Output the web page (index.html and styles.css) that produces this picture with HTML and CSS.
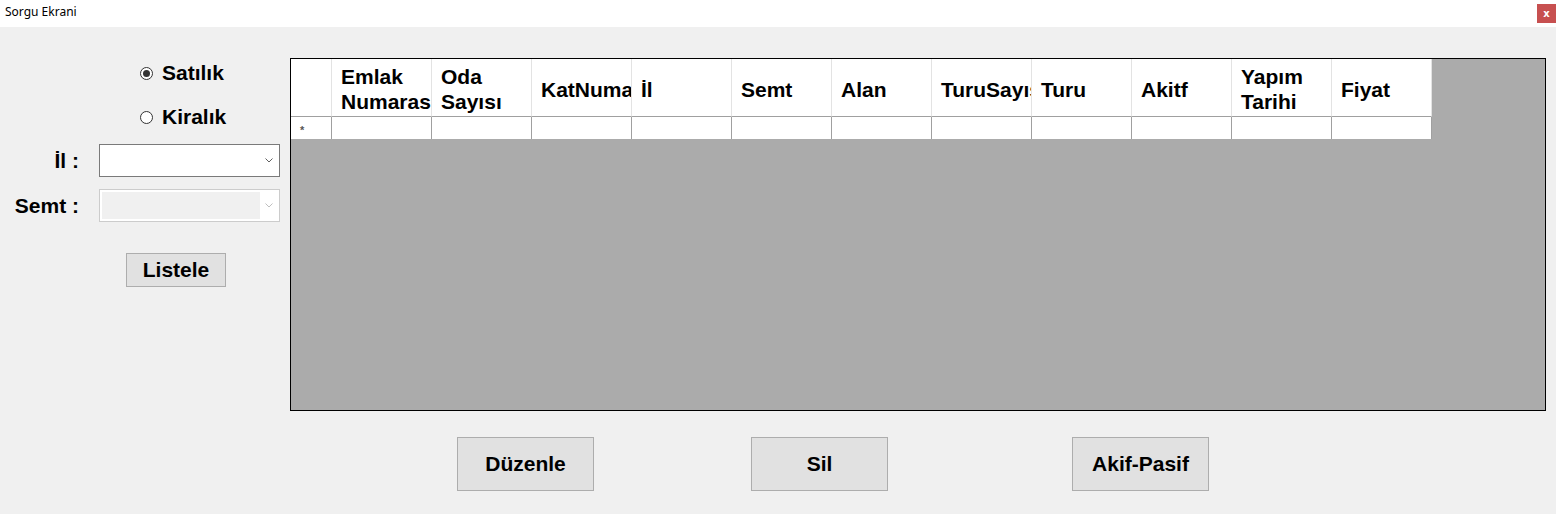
FILE: index.html
```html
<!DOCTYPE html>
<html lang="tr">
<head>
<meta charset="utf-8">
<title>Sorgu Ekrani</title>
<link rel="stylesheet" href="styles.css">
</head>
<body>
<div class="window">
  <div class="titlebar">
    <span class="title">Sorgu Ekrani</span>
    <div class="close">x</div>
  </div>
  <div class="main">
    <div class="left">
      <div class="radio"><span class="radio-mark checked"></span><span>Satılık</span></div>
      <div class="radio"><span class="radio-mark"></span><span>Kiralık</span></div>
      <div class="field field-il">
        <span class="field-label">İl :</span>
        <div class="combo">
          <span class="combo-arrow"><svg width="8" height="5" viewBox="0 0 8 5"><polyline points="0.5,0.5 4,4 7.5,0.5" fill="none" stroke="#606060" stroke-width="1"/></svg></span>
        </div>
      </div>
      <div class="field field-semt">
        <span class="field-label">Semt :</span>
        <div class="combo disabled">
          <span class="combo-fill"></span>
          <span class="combo-arrow"><svg width="8" height="5" viewBox="0 0 8 5"><polyline points="0.5,0.5 4,4 7.5,0.5" fill="none" stroke="#bfbfbf" stroke-width="1"/></svg></span>
        </div>
      </div>
      <div class="btn listele">Listele</div>
    </div>
    <div class="grid">
      <div class="table">
        <div class="th corner"></div>
        <div class="th"><span>Emlak Numarası</span></div>
        <div class="th"><span>Oda Sayısı</span></div>
        <div class="th"><span>KatNumarası</span></div>
        <div class="th"><span>İl</span></div>
        <div class="th"><span>Semt</span></div>
        <div class="th"><span>Alan</span></div>
        <div class="th"><span>TuruSayısı</span></div>
        <div class="th"><span>Turu</span></div>
        <div class="th"><span>Akitf</span></div>
        <div class="th"><span>Yapım Tarihi</span></div>
        <div class="th"><span>Fiyat</span></div>
        <div class="td row-head">*</div>
        <div class="td"></div>
        <div class="td"></div>
        <div class="td"></div>
        <div class="td"></div>
        <div class="td"></div>
        <div class="td"></div>
        <div class="td"></div>
        <div class="td"></div>
        <div class="td"></div>
        <div class="td"></div>
        <div class="td"></div>
      </div>
    </div>
  </div>
  <div class="actions">
    <div class="btn action">Düzenle</div>
    <div class="btn action action-sil">Sil</div>
    <div class="btn action action-akif">Akif-Pasif</div>
  </div>
</div>
</body>
</html>
```
FILE: styles.css
```css
html, body {
  margin: 0;
  padding: 0;
}
body {
  width: 1556px;
  height: 514px;
  overflow: hidden;
  background: #f0f0f0;
  font-family: "Liberation Sans", Arial, sans-serif;
  color: #000;
}
.window {
  width: 1556px;
  height: 514px;
}
.titlebar {
  height: 27px;
  background: #fff;
  display: flex;
  justify-content: space-between;
  align-items: flex-start;
}
.title {
  font-family: "Noto Sans", "Open Sans", sans-serif;
  font-size: 12px;
  padding: 3px 0 0 5px;
}
.close {
  width: 19px;
  height: 19px;
  margin-top: 4px;
  background: #c75050;
  color: #fff;
  font-family: "DejaVu Sans", sans-serif;
  font-weight: bold;
  font-size: 10px;
  display: flex;
  align-items: center;
  justify-content: center;
  line-height: 1;
}
.main {
  display: flex;
}
.left {
  width: 290px;
  padding-top: 34px;
  display: flex;
  flex-direction: column;
  align-items: flex-start;
  font-size: 21px;
  font-weight: bold;
}
.radio {
  display: flex;
  align-items: center;
  gap: 9px;
  height: 24px;
  margin-left: 140px;
}
.radio + .radio {
  margin-top: 20px;
}
.radio-mark {
  width: 13px;
  height: 13px;
  box-sizing: border-box;
  border: 1px solid #333;
  border-radius: 50%;
  background: #fff;
  display: flex;
  align-items: center;
  justify-content: center;
}
.radio-mark.checked::after {
  content: "";
  width: 7px;
  height: 7px;
  border-radius: 50%;
  background: #333;
}
.field {
  display: flex;
  align-items: center;
  height: 33px;
}
.field-il {
  margin-top: 15px;
}
.field-semt {
  margin-top: 12px;
}
.field-label {
  width: 99px;
  box-sizing: border-box;
  text-align: right;
  padding-right: 20px;
}
.combo {
  width: 181px;
  height: 33px;
  box-sizing: border-box;
  border: 1px solid #7a7a7a;
  background: #fff;
  display: flex;
  justify-content: flex-end;
  align-items: stretch;
}
.combo.disabled {
  border-color: #cccccc;
  padding: 2px 0 2px 2px;
}
.combo-fill {
  flex: 1;
  background: #f0f0f0;
}
.combo-arrow {
  width: 18px;
  padding-right: 1px;
  display: flex;
  align-items: center;
  justify-content: center;
}
.btn {
  box-sizing: border-box;
  background: #e1e1e1;
  border: 1px solid #adadad;
  font-family: "Liberation Sans", Arial, sans-serif;
  font-weight: bold;
  font-size: 21px;
  display: flex;
  align-items: center;
  justify-content: center;
}
.listele {
  margin: 31px 0 0 126px;
  width: 100px;
  height: 34px;
}
.grid {
  margin-top: 31px;
  width: 1256px;
  height: 353px;
  box-sizing: border-box;
  border: 1px solid #000;
  background: #ababab;
  overflow: hidden;
}
.table {
  display: grid;
  grid-template-columns: 41px repeat(11, 100px);
  grid-template-rows: 58px 22px;
  width: max-content;
}
.th {
  background: #fff;
  box-sizing: border-box;
  border-right: 1px solid #e3e3e3;
  border-bottom: 1px solid #a0a0a0;
  overflow: hidden;
  padding: 3px 0 0 9px;
  display: flex;
  align-items: center;
  font-size: 21px;
  font-weight: bold;
  line-height: 25px;
}
.td {
  background: #fff;
  box-sizing: border-box;
  border-right: 1px solid #a0a0a0;
}
.row-head {
  font-size: 11px;
  font-weight: bold;
  color: #555;
  padding: 8px 0 0 9px;
  line-height: 1;
}
.actions {
  display: flex;
  margin-top: 26px;
  padding-left: 457px;
}
.action {
  width: 137px;
  height: 54px;
}
.action-sil {
  margin-left: 157px;
}
.action-akif {
  margin-left: 184px;
}
```
